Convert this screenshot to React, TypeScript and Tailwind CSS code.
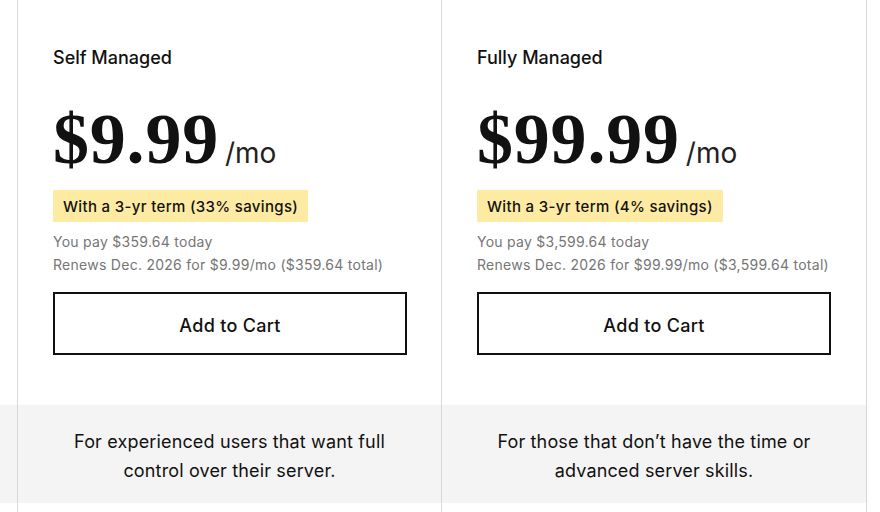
import React from "react";

type Plan = {
  name: string;
  price: string;
  term: string;
  today: string;
  renews: string;
  blurb: string[];
};

const plans: Plan[] = [
  {
    name: "Self Managed",
    price: "$9.99",
    term: "With a 3-yr term (33% savings)",
    today: "You pay $359.64 today",
    renews: "Renews Dec. 2026 for $9.99/mo ($359.64 total)",
    blurb: ["For experienced users that want full", "control over their server."],
  },
  {
    name: "Fully Managed",
    price: "$99.99",
    term: "With a 3-yr term (4% savings)",
    today: "You pay $3,599.64 today",
    renews: "Renews Dec. 2026 for $99.99/mo ($3,599.64 total)",
    blurb: ["For those that don\u2019t have the time or", "advanced server skills."],
  },
];

const sans = { fontFamily: "Inter, 'Noto Sans', sans-serif" };

function PlanCard({ plan, last }: { plan: Plan; last?: boolean }) {
  return (
    <div
      className={`flex flex-col border-l border-[#d8d8d8] ${
        last ? "w-[426px] border-r" : "w-[424px]"
      }`}
    >
      {/* Pricing block */}
      <div className="h-[405px] pl-[35px] pr-[34px] pt-[46px]">
        <h3 className="text-[18px] leading-[24px] font-medium text-[#111]">{plan.name}</h3>

        <div className="mt-[33px] flex items-baseline h-[72px]">
          <span className="font-['Liberation_Serif',serif] font-bold text-[72px] leading-none text-[#111] tracking-[0.8px]">
            {plan.price}
          </span>
          <span className="ml-[6px] text-[28px] leading-none text-[#222]">/mo</span>
        </div>

        <div className="mt-[15px] inline-flex h-[32px] items-center bg-[#feeba3] px-[10px] pt-[3px] text-[15px] font-medium tracking-[0.33px] text-[#111]">
          {plan.term}
        </div>

        <div className="mt-[8px] text-[14px] leading-[23px] tracking-[0.27px] text-[#767676]">
          <p>{plan.today}</p>
          <p>{plan.renews}</p>
        </div>

        <button className="mt-[16px] flex h-[63px] w-[354px] items-center justify-center border-2 border-[#111] bg-white pt-[3px] text-[18px] font-medium tracking-[0.3px] text-[#111]">
          Add to Cart
        </button>
      </div>

      {/* Description band */}
      <div className="flex h-[98px] flex-col items-center justify-center bg-[#f4f4f4] pt-[4px] text-center text-[18px] leading-[29px] tracking-[0.15px] text-[#111]">
        {plan.blurb.map((line) => (
          <p key={line}>{line}</p>
        ))}
      </div>
    </div>
  );
}

export default function App() {
  return (
    <div className="flex h-[512px] w-[880px] overflow-hidden bg-white" style={sans}>
      {/* Edge of the previous column */}
      <div className="flex w-[17px] flex-col">
        <div className="h-[405px]" />
        <div className="h-[98px] bg-[#f4f4f4]" />
      </div>
      {plans.map((plan, i) => (
        <PlanCard key={plan.name} plan={plan} last={i === plans.length - 1} />
      ))}
    </div>
  );
}
